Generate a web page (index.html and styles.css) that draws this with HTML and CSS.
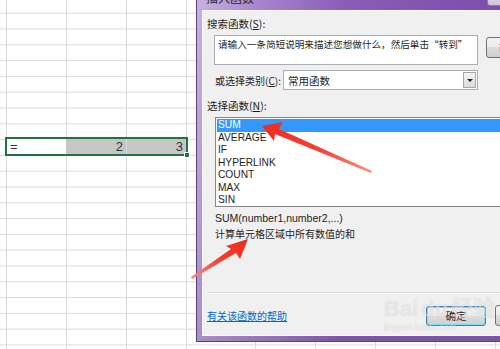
FILE: index.html
```html
<!DOCTYPE html>
<html lang="zh-CN">
<head>
  <meta charset="UTF-8">
  <title>插入函数</title>
  <link rel="stylesheet" href="styles.css">
</head>
<body>
  <div class="sheet">
    <div class="cols">
      <div class="col c0"></div>
      <div class="col"></div>
      <div class="col"></div>
      <div class="col"></div>
      <div class="col wide"></div>
      <div class="col"></div>
      <div class="col"></div>
      <div class="col"></div>
      <div class="col"></div>
    </div>
    <div class="selection">
      <div class="cell first">=</div>
      <div class="cell num">2</div>
      <div class="cell num last">3</div>
      <span class="handle"></span>
    </div>
  </div>

  <div class="dialog">
    <div class="titlebar">
      <span class="title">插入函数</span>
      <span class="tb-btn"></span>
    </div>
    <div class="client">
      <div class="label first-label">搜索函数(<u>S</u>):</div>
      <div class="search-row">
        <div class="textbox">请输入一条简短说明来描述您想做什么，然后单击“转到”</div>
        <button class="btn go">转到(G)</button>
      </div>
      <div class="cat-row">
        <span class="cat-label">或选择类别(<u>C</u>):</span>
        <div class="select">
          <span>常用函数</span>
          <span class="drop"><i></i></span>
        </div>
      </div>
      <div class="label list-label">选择函数(<u>N</u>):</div>
      <ul class="list">
        <li class="sel">SUM</li>
        <li>AVERAGE</li>
        <li>IF</li>
        <li>HYPERLINK</li>
        <li>COUNT</li>
        <li>MAX</li>
        <li>SIN</li>
      </ul>
      <div class="sig">SUM(number1,number2,...)</div>
      <div class="desc">计算单元格区域中所有数值的和</div>
      <div class="sep"></div>
      <div class="footer">
        <a class="help" href="#">有关该函数的帮助</a>
        <button class="btn ok">确定</button>
        <button class="btn">取消</button>
      </div>
    </div>
  </div>

  <div class="watermark">Bai<span>du</span>经验<small>jingyan.baidu.com</small></div>

  <svg class="arrows" width="500" height="349" viewBox="0 0 500 349">
    <defs>
      <linearGradient id="a1" x1="372" y1="172" x2="262" y2="126" gradientUnits="userSpaceOnUse">
        <stop offset="0" stop-color="#ff8a7a"/>
        <stop offset="0.5" stop-color="#f5402f"/>
        <stop offset="1" stop-color="#ef2b1f"/>
      </linearGradient>
      <linearGradient id="a2" x1="191" y1="278" x2="247" y2="240" gradientUnits="userSpaceOnUse">
        <stop offset="0" stop-color="#ff8a7a"/>
        <stop offset="0.5" stop-color="#f5402f"/>
        <stop offset="1" stop-color="#ef2b1f"/>
      </linearGradient>
    </defs>
    <polygon fill="url(#a1)" points="262,126 283,122 279,129 372,171 371,173 275,134 274,141"/>
    <polygon fill="url(#a2)" points="248,239 240,259 236,253 192,279 191,277 231,249 226,246"/>
  </svg>
</body>
</html>
```

FILE: styles.css
```css
body {
  margin: 0;
  width: 500px; height: 349px;
  overflow: hidden;
  position: relative;
  background: #fff;
  font-family: "Liberation Sans", Arial, sans-serif;
}

/* spreadsheet behind the dialog */
.sheet {
  position: relative;
  height: 349px;
  background-image: linear-gradient(to bottom, #dadada 1px, transparent 1px);
  background-size: 100% 15.8px;
  background-position: 0 12.7px;
}
.cols { display: flex; height: 100%; }
.col {
  flex: none; width: 60px; height: 100%;
  border-right: 1px solid #dadada;
  box-sizing: border-box;
}
.col.c0 { width: 7px; }
.col.wide { width: 69px; }

.selection {
  position: absolute; left: 5px; top: 137px;
  width: 183px; height: 19px;
  border: 2px solid #217346;
  box-sizing: border-box;
  display: flex;
  background: #fff;
}
.cell {
  width: 60px; height: 15px;
  font-size: 13px; line-height: 15px;
  color: #333;
  box-sizing: border-box;
}
.cell.first { width: 59px; padding-left: 3px; }
.cell.num { background: #c6c6c6; text-align: right; padding-right: 3px; }
.cell.last { border-left: 1px solid #d8d8d8; }
.handle {
  position: absolute; right: -4px; bottom: -4px;
  width: 4px; height: 4px;
  background: #217346;
  border: 1px solid #fff;
}

/* dialog window */
.dialog {
  position: absolute; left: 196px; top: -14px;
  width: 330px; height: 356px;
  box-sizing: border-box;
  padding: 0 5px 5px 5px;
  border: 1px solid #5e3f86; border-top: none;
  background:
    linear-gradient(to right, rgba(255,255,255,.35), rgba(255,255,255,0) 45%),
    linear-gradient(to bottom, #a68acb, #7a54a7);
  font-family: "Noto Sans CJK SC", "Liberation Sans", sans-serif;
  color: #1e1e1e;
}
.titlebar {
  height: 24px;
  display: flex; align-items: flex-start;
  background: linear-gradient(to right, #c6b1e0 0, #a887cd 18%, #8a5db6 45%, #7c4ca8 100%);
  margin: 0 -5px;
  padding-left: 9px;
}
.title { width: 281px; font-size: 12px; line-height: 24px; color: #2a2a2a; }
.tb-btn {
  width: 24px; height: 17px; margin-top: 1px;
  border: 1px solid #8d7aa8; border-radius: 3px;
  background: linear-gradient(#e9e4f0, #cfc5dd);
}
.client {
  height: 326px;
  box-sizing: border-box;
  border: 1px solid #f8f8f8;
  background: #f0f0f0;
  padding-left: 4px;
  font-size: 10.5px;
  white-space: nowrap;
}
.label { line-height: 14px; }
.label.first-label { margin-top: 6px; }

.search-row { display: flex; margin: 4px 0 0 7px; }
.textbox {
  flex: none;
  width: 264px; height: 30px;
  box-sizing: border-box;
  border: 1px solid #abadb3;
  background: #fff;
  padding: 1px 0 0 3px;
  font-size: 9.6px;
  line-height: 14px;
  overflow: hidden;
}
.btn {
  height: 21px;
  font-family: inherit; font-size: 10.5px; color: #1e1e1e;
  border: 1px solid #707070; border-radius: 3px;
  background: linear-gradient(#f3f3f3, #ebebeb 50%, #dddddd 50%, #cfcfcf);
  padding: 0;
  white-space: nowrap;
}
.btn.go { flex: none; width: 70px; margin: 2px 0 0 8px; text-align: left; padding-left: 12px; }

.cat-row { display: flex; align-items: center; margin: 5px 0 0 8px; height: 20px; }
.cat-label { flex: none; width: 68px; font-size: 10px; }
.select {
  flex: none;
  width: 195px; height: 20px;
  box-sizing: border-box;
  border: 1px solid #abadb3;
  background: #fff;
  display: flex; align-items: center; justify-content: space-between;
  padding: 0 1px 0 4px;
}
.drop {
  width: 13px; height: 16px;
  box-sizing: border-box;
  border: 1px solid #a5a5a5;
  background: linear-gradient(#f4f4f4, #dcdcdc);
  display: flex; align-items: center; justify-content: center;
}
.drop i {
  width: 0; height: 0;
  border-left: 3px solid transparent; border-right: 3px solid transparent;
  border-top: 3px solid #222;
}

.label.list-label { margin-top: 9px; }
.list {
  list-style: none;
  margin: 4px 0 0 8px; padding: 1px;
  width: 320px; height: 90px;
  box-sizing: border-box;
  border: 1px solid #828790;
  background: #fff;
  font-family: "Liberation Sans", Arial, sans-serif;
  font-size: 10.2px;
}
.list li { height: 12.5px; line-height: 12.5px; padding-left: 1px; color: #1e1e1e; }
.list li.sel { background: #3399ff; color: #fff; }

.sig {
  margin: 4px 0 0 8px;
  line-height: 14px;
  font-family: "Liberation Sans", Arial, sans-serif;
  font-size: 10.5px;
}
.desc { margin: 2px 0 0 8px; line-height: 14px; font-size: 10px; }
.sep {
  margin-top: 51px; height: 1px;
  background: #dcdcdc;
  border-bottom: 1px solid #fafafa;
}
.footer {
  display: grid;
  grid-template-columns: 210px 60px 60px;
  column-gap: 9px;
  align-items: center;
  margin-top: 11px;
}
.help { font-size: 10px; color: #0066cc; }
.btn.ok {
  height: 20px;
  border-color: #3c7fb1;
  box-shadow: inset 0 0 0 1px #7fd8f8;
}

.watermark {
  position: absolute; left: 384px; top: 297px;
  font-family: "Liberation Sans", Arial, sans-serif;
  font-size: 22px; font-weight: bold;
  color: rgba(255,255,255,.5);
  text-shadow: 0 0 1px rgba(0,0,0,.15);
  line-height: 24px;
  white-space: nowrap;
}
.watermark span { margin: 0 3px; }
.watermark small {
  display: block;
  font-size: 9px; font-weight: normal; line-height: 12px;
}

.arrows { position: absolute; left: 0; top: 0; pointer-events: none; }
```
